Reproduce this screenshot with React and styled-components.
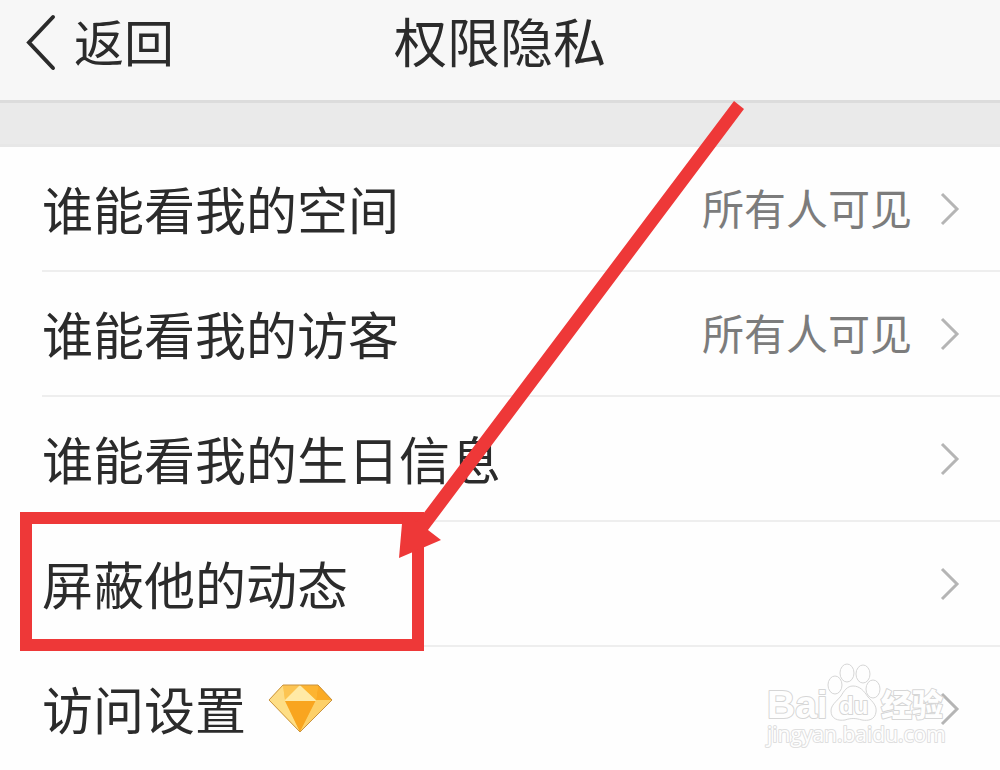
import styled, {createGlobalStyle, css} from "styled-components";

const GlobalStyle = createGlobalStyle`
    *, *::after {
        box-sizing: border-box;
    }

    body {
        margin: 0;
        background: #fefefe;
        color: #2b2b2b;
        font-family: "Noto Sans CJK SC", "Noto Sans", sans-serif;
    }
`

const Page = styled.div`
    position: relative;
    overflow: hidden;
`

const Header = styled.header`
    display: grid;
    grid-template-columns: 1fr auto 1fr;
    align-items: center;
    height: 100px;
    padding: 0 24px 16px;
    background: #f7f7f7;
`

const BackButton = styled.button`
    display: flex;
    align-items: center;
    justify-self: start;
    gap: 14px;
    padding: 0;
    border: 0;
    background: none;
    color: inherit;
    font: inherit;
    font-size: 50px;
    line-height: 56px;
    cursor: pointer;
`

const BackText = styled.span`
    padding-bottom: 4px;
`

const Title = styled.h1`
    margin: 0;
    padding-bottom: 4px;
    font-size: 53px;
    font-weight: 400;
    line-height: 56px;
`

const Divider = styled.div`
    height: 47px;
    border-top: 3px solid #dcdcdc;
    border-bottom: 3px solid #e7e7e7;
    background: #eaeaea;
`

const List = styled.ul`
    margin: 0;
    padding: 0 0 0 42px;
    list-style: none;
`

const Item = styled.li`
    position: relative;

    & + & {
        border-top: 2px solid #eeeeee;
    }

    ${({$marked}) => $marked && css`
        z-index: 1;

        &::after {
            content: "";
            position: absolute;
            top: -10px;
            left: -22px;
            width: 404px;
            height: 139px;
            border: 12px solid #ee3838;
            pointer-events: none;
        }
    `}
`

const RowLink = styled.a`
    display: flex;
    align-items: center;
    height: 123px;
    padding-right: 40px;
    color: inherit;
    text-decoration: none;
`

const Label = styled.span`
    font-size: 51px;
    line-height: 60px;
    padding-bottom: 2px;
`

const Value = styled.span`
    color: #7c7c7c;
    font-size: 42px;
    line-height: 60px;
    padding-bottom: 4px;
`

const RowEnd = styled.span`
    display: flex;
    align-items: center;
    gap: 28px;
    margin-left: auto;
`

const Gem = styled.svg`
    margin-left: 22px;
`

const Arrow = styled.svg`
    position: absolute;
    z-index: 2;
    top: 100px;
    left: 398px;
    pointer-events: none;
`

const Watermark = styled.svg`
    position: absolute;
    top: 656px;
    right: 48px;
    pointer-events: none;
`

const BackIcon = () => (
    <svg width="36" height="60" viewBox="0 0 36 60" fill="none" aria-hidden="true">
        <path d="M29 5 L5 30.500 L29 56" stroke="#2b2b2b" strokeWidth="4" strokeLinecap="round"/>
    </svg>
)

const Chevron = () => (
    <svg width="20" height="34" viewBox="0 0 20 34" fill="none" aria-hidden="true">
        <path d="M2 2 L17 17 L2 32" stroke="#b5b5b5" strokeWidth="3"/>
    </svg>
)

const GemIcon = () => (
    <Gem width="66" height="50" viewBox="0 0 66 50" aria-hidden="true">
        <path d="M15 1 H50 L64 16 L32 48 L1 16 Z" fill="#fdc84c"/>
        <path d="M15 1 L1 16 H17 Z" fill="#fddc85"/>
        <path d="M15 1 H32 L17 16 Z" fill="#fcc452"/>
        <path d="M32 1 L16 17 H49 Z" fill="#ffeaa6"/>
        <path d="M32 1 H50 L48 16 Z" fill="#fdb431"/>
        <path d="M50 1 L64 16 H48 Z" fill="#fbaa24"/>
        <path d="M1 16 H17 L32 48 Z" fill="#fede85"/>
        <path d="M17 17 H48 L32 48 Z" fill="#f9a51f"/>
        <path d="M48 16 H64 L32 48 Z" fill="#fdd068"/>
        <path d="M15 1 H50 L64 16 L32 48 L1 16 Z" fill="none" stroke="#c99340" strokeWidth="1"/>
    </Gem>
)

const PointerArrow = () => (
    <Arrow width="350" height="460" viewBox="0 0 350 460" aria-hidden="true">
        <path d="M336 1 L346 9 L30 430 L43 440 L1 458 L5 412 L19 422 Z" fill="#ee3838"/>
    </Arrow>
)

const BaiduMark = () => (
    <Watermark width="188" height="98" viewBox="0 0 188 98" fill="#fefefe" stroke="#d6d6d6" strokeWidth="1">
        <g strokeWidth="2" paintOrder="stroke" strokeLinejoin="round">
            <text x="3" y="62" fontFamily="Liberation Sans, sans-serif" fontSize="39" fontWeight="700">Bai</text>
            <text x="117" y="60" fontFamily="Noto Sans CJK SC, sans-serif" fontSize="31" fontWeight="900">经验</text>
        </g>
        <ellipse cx="71" cy="29" rx="7" ry="9"/>
        <ellipse cx="83" cy="17" rx="7" ry="9"/>
        <ellipse cx="99" cy="18" rx="7" ry="9"/>
        <ellipse cx="109" cy="33" rx="7" ry="9"/>
        <path d="M89 30 C96 30 100 35 104 41 C109 46 113 50 112 56 C111 64 104 65 98 64 C91 62 87 62 81 64 C74 65 67 63 67 55 C67 49 72 46 77 40 C80 35 83 30 89 30 Z"/>
        <g strokeWidth="2" paintOrder="stroke" strokeLinejoin="round">
            <text x="75" y="58" fontFamily="Liberation Sans, sans-serif" fontSize="24" fontWeight="700">du</text>
            <text x="3" y="86" stroke="#dfdfdf" fontFamily="Open Sans, sans-serif" fontSize="21" fontWeight="500">jingyan.baidu.com</text>
        </g>
    </Watermark>
)

const settings = [
    {id: 'space', title: '谁能看我的空间', value: '所有人可见'},
    {id: 'visitors', title: '谁能看我的访客', value: '所有人可见'},
    {id: 'birthday', title: '谁能看我的生日信息'},
    {id: 'block', title: '屏蔽他的动态', marked: true},
    {id: 'access', title: '访问设置', gem: true},
]

const App = () => {
    return (
        <>
            <GlobalStyle/>
            <Page>
                <Header>
                    <BackButton type="button">
                        <BackIcon/>
                        <BackText>返回</BackText>
                    </BackButton>
                    <Title>权限隐私</Title>
                </Header>
                <Divider/>
                <List>
                    {settings.map(({id, title, value, marked, gem}) => (
                        <Item key={id} $marked={marked}>
                            <RowLink href={`#${id}`}>
                                <Label>{title}</Label>
                                {gem && <GemIcon/>}
                                <RowEnd>
                                    {value && <Value>{value}</Value>}
                                    <Chevron/>
                                </RowEnd>
                            </RowLink>
                        </Item>
                    ))}
                </List>
                <PointerArrow/>
                <BaiduMark/>
            </Page>
        </>
    )
}

export default App
